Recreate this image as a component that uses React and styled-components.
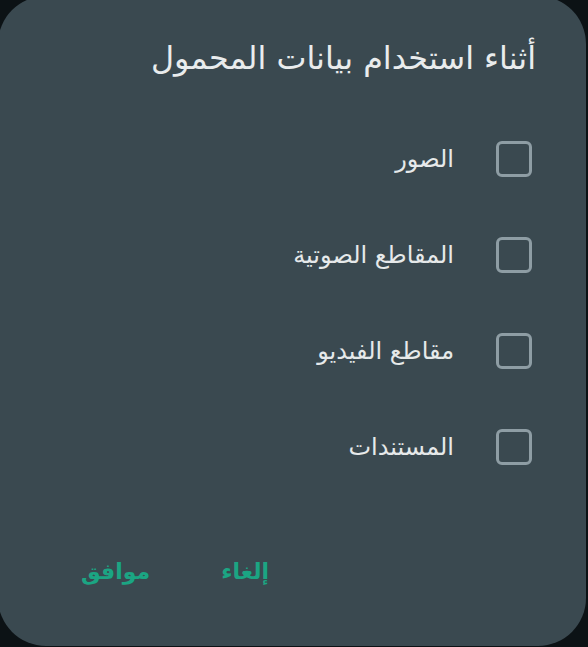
import React, { useState } from 'react'
import styled, { createGlobalStyle } from 'styled-components'

const GlobalStyle = createGlobalStyle`
  html, body {
    margin: 0;
    padding: 0;
    background: #0c1215;
    overflow: hidden;
  }
  body {
    font-family: "DejaVu Sans", "Noto Sans", sans-serif;
  }
`

const Dialog = styled.div`
  direction: rtl;
  box-sizing: border-box;
  width: 588px;
  height: 650px;
  margin: -4px 0 0 -2px;
  padding: 41px 50px 0 83px;
  background: #3a4950;
  border-radius: 48px;
  display: flex;
  flex-direction: column;
`

const Title = styled.h2`
  margin: 0;
  font-size: 31.8px;
  line-height: 42px;
  font-weight: normal;
  color: #e9eced;
`

const OptionList = styled.div`
  margin-top: 32px;
  display: flex;
  flex-direction: column;
`

const OptionRow = styled.label`
  height: 96px;
  display: flex;
  align-items: center;
  gap: 42px;
  padding-right: 4px;
  cursor: pointer;
`

const Box = styled.span`
  box-sizing: border-box;
  width: 36px;
  height: 36px;
  flex: none;
  border: 3.5px solid ${p => (p.checked ? '#1daa86' : '#8e9da4')};
  background: ${p => (p.checked ? '#1daa86' : 'transparent')};
  border-radius: 6px;
`

const OptionText = styled.span`
  font-size: 24px;
  color: #e6e9ea;
`

const Actions = styled.div`
  margin-top: 57px;
  display: flex;
  justify-content: flex-end;
  gap: 71px;
`

const ActionButton = styled.button`
  background: none;
  border: none;
  padding: 0;
  font-family: inherit;
  font-size: 22px;
  line-height: 40px;
  font-weight: bold;
  color: #1ba583;
  cursor: pointer;
`

const options = ['الصور', 'المقاطع الصوتية', 'مقاطع الفيديو', 'المستندات']

export default function App() {
  const [checked, setChecked] = useState({})

  return (
    <>
      <GlobalStyle />
      <Dialog>
        <Title>أثناء استخدام بيانات المحمول</Title>
        <OptionList>
          {options.map(o => (
            <OptionRow key={o} onClick={() => setChecked(c => ({ ...c, [o]: !c[o] }))}>
              <Box checked={checked[o]} />
              <OptionText>{o}</OptionText>
            </OptionRow>
          ))}
        </OptionList>
        <Actions>
          <ActionButton>إلغاء</ActionButton>
          <ActionButton>موافق</ActionButton>
        </Actions>
      </Dialog>
    </>
  )
}
